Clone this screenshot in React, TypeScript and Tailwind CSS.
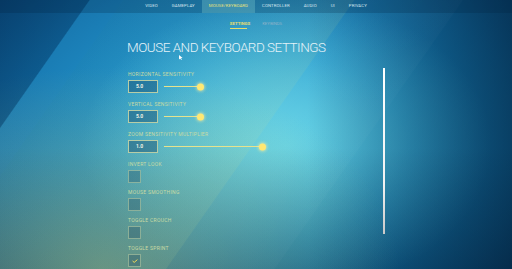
const navItems = ["VIDEO", "GAMEPLAY", "MOUSE/KEYBOARD", "CONTROLLER", "AUDIO", "UI", "PRIVACY"];

function SliderRow({ label, value, fill }: { label: string; value: string; fill: string }) {
  return (
    <div className="mb-[6px]">
      <div className="h-[10px] text-[5px] leading-[10px] tracking-[0.3px] text-[#c9dba4]">{label}</div>
      <div className="mt-[1px] flex items-center">
        <div className="flex h-[13px] w-[30px] items-center border border-[#b8cda6] bg-[rgba(10,50,85,0.35)] pl-[7px] text-[5px] font-bold text-[#eef3e4]">
          {value}
        </div>
        <div className={`relative ml-[6px] h-[1px] bg-[#e6e38e] ${fill}`}>
          <div className="absolute right-[-3.5px] top-1/2 size-[7px] -translate-y-1/2 rounded-full bg-[#ffe872] shadow-[0_0_3px_1px_rgba(255,240,160,0.6)]" />
        </div>
      </div>
    </div>
  );
}

function CheckRow({ label, checked }: { label: string; checked?: boolean }) {
  return (
    <div className="mb-[4px]">
      <div className="h-[10px] text-[5px] leading-[10px] tracking-[0.3px] text-[#c9dba4]">{label}</div>
      <div className="mt-[1px] flex size-[13px] items-center justify-center border border-[rgba(195,215,170,0.55)] bg-[rgba(30,70,95,0.3)]">
        {checked && (
          <svg width="6" height="4" viewBox="0 0 6 4">
            <path d="M0.6 2 L2.2 3.4 L5.4 0.6" fill="none" stroke="#f2dc55" strokeWidth="1" />
          </svg>
        )}
      </div>
    </div>
  );
}

export default function App() {
  return (
    <div className="relative h-[269px] w-full overflow-hidden font-['Roboto',sans-serif] [background:linear-gradient(125deg,rgba(0,20,55,0.42)_0%,rgba(0,20,55,0.3)_12.7%,rgba(255,255,255,0.03)_12.9%,rgba(255,255,255,0.03)_17.5%,rgba(220,235,170,0.04)_17.7%,rgba(220,235,170,0.13)_50.5%,rgba(255,255,255,0.04)_50.7%,rgba(255,255,255,0.02)_66%,rgba(0,0,0,0)_66.2%),radial-gradient(ellipse_58%_75%_at_20%_100%,rgba(165,185,115,0.5),rgba(165,185,115,0)_100%),linear-gradient(90deg,rgba(0,15,35,0)_60%,rgba(0,15,35,0.55)_100%),linear-gradient(180deg,rgba(0,0,0,0)_55%,rgba(0,10,25,0.28)_100%),radial-gradient(ellipse_40%_55%_at_56%_54%,rgba(105,215,230,0.85)_0%,rgba(105,215,230,0)_100%),radial-gradient(ellipse_80%_100%_at_52%_55%,#45b9de_0%,#1b92cb_35%,#1276b0_65%,#0a4f84_100%)]">
      {/* top nav */}
      <nav className="flex h-[13px] justify-center bg-[rgba(0,30,60,0.22)] text-[4.3px] tracking-[0.1px]">
        {navItems.map((item) => (
          <div
            key={item}
            className={
              item === "MOUSE/KEYBOARD"
                ? "flex items-center bg-[rgba(120,200,205,0.35)] px-[7px] text-[#e9e37a]"
                : "flex items-center px-[7px] text-[#d6e6ee]"
            }
          >
            {item}
          </div>
        ))}
      </nav>

      {/* sub tabs */}
      <div className="flex h-[17px] justify-center gap-[12px] pt-[8px] text-[4.3px] leading-[5px]">
        <div>
          <div className="font-bold text-[#e6df6e]">SETTINGS</div>
          <div className="mt-[2px] h-[1px] w-[17px] bg-[#e6df6e]" />
        </div>
        <div className="text-[#8fb2c8]">KEYBINDS</div>
      </div>

      <main className="mx-auto w-[258px]">
        <h1 className="mt-[10px] text-[13.5px] font-light leading-[14.5px] tracking-[-0.5px] text-[#e3f2f8]">
          MOUSE AND KEYBOARD SETTINGS
        </h1>

        <div className="mt-[14.5px] flex items-start">
          <div className="flex-1 pl-[1px]">
            <SliderRow label="HORIZONTAL SENSITIVITY" value="5.0" fill="w-[36px]" />
            <SliderRow label="VERTICAL SENSITIVITY" value="5.0" fill="w-[36px]" />
            <SliderRow label="ZOOM SENSITIVITY MULTIPLIER" value="1.0" fill="w-[98px]" />
            <CheckRow label="INVERT LOOK" />
            <CheckRow label="MOUSE SMOOTHING" />
            <CheckRow label="TOGGLE CROUCH" />
            <CheckRow label="TOGGLE SPRINT" checked />
          </div>
          <div className="mt-[-1px] h-[166px] w-[2px] bg-[linear-gradient(180deg,#ffffff,#f2f2f2_70%,#c9c9c9)]" />
        </div>
      </main>

      {/* mouse pointer */}
      <svg className="absolute left-[179px] top-[55px]" width="4" height="5" viewBox="0 0 4 5">
        <path d="M0 0 L0 4.5 L1.2 3.4 L2.2 5 L2.8 4.6 L2 3.1 L3.6 3 Z" fill="#ffffff" />
      </svg>
    </div>
  );
}
